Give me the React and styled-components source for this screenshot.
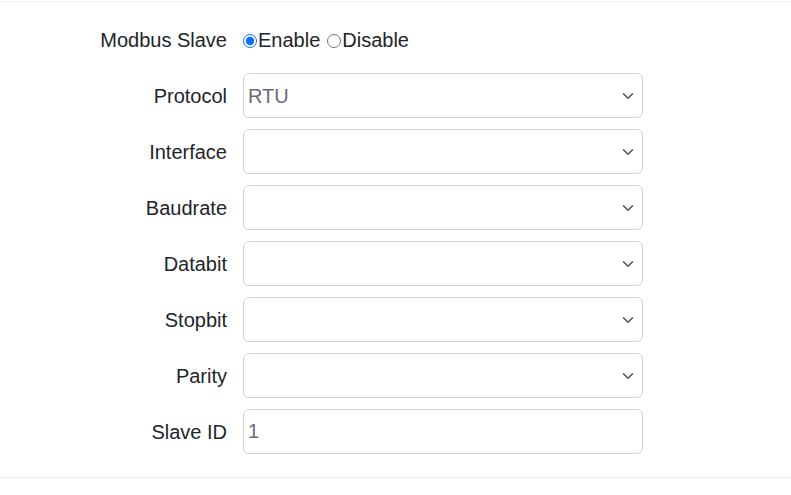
import React from 'react';
import styled, { createGlobalStyle } from 'styled-components';

const GlobalStyle = createGlobalStyle`
	body {
		margin: 0;
		background: #fff;
		font-family: Arial, 'Liberation Sans', sans-serif;
		color: #212529;
	}
`;

const Page = styled.div`
	padding-top: 1px;
`;

const Form = styled.form`
	display: flex;
	flex-direction: column;
	gap: 11px;
	padding: 15px 0 23px;
	border-top: 1px solid #eeeeee;
	border-bottom: 1px solid #eeeeee;
`;

const Row = styled.div`
	display: grid;
	grid-template-columns: 227px 400px;
	column-gap: 16px;
	align-items: center;
	min-height: 45px;
`;

const Label = styled.label`
	font-size: 20px;
	text-align: right;
	color: #212529;
	padding-top: 2px;
`;

const Radios = styled.div`
	display: flex;
	align-items: center;
	font-size: 20px;
	padding-top: 2px;
`;

const RadioItem = styled.label`
	display: flex;
	align-items: center;
	margin-right: 7px;

	input {
		margin: 0 1px 0 0;
		width: 14px;
		height: 14px;
		accent-color: #0d6efd;
	}
`;

const chevron =
	"data:image/svg+xml,%3csvg xmlns='http://www.w3.org/2000/svg' viewBox='0 0 16 16'%3e%3cpath fill='none' stroke='%23555' stroke-linecap='round' stroke-linejoin='round' stroke-width='2' d='m2 5 6 6 6-6'/%3e%3c/svg%3e";

const Select = styled.select`
	appearance: none;
	height: 45px;
	width: 400px;
	box-sizing: border-box;
	padding: 0 32px 0 4px;
	font-family: Arial, 'Liberation Sans', sans-serif;
	font-size: 20px;
	color: #6c6a75;
	background: #fff url("${chevron}") no-repeat right 8px center / 12px 12px;
	border: 1px solid #ced4da;
	border-radius: 6px;
	outline: none;
`;

const TextInput = styled.input`
	height: 45px;
	width: 400px;
	box-sizing: border-box;
	padding: 0 4px;
	font-family: Arial, 'Liberation Sans', sans-serif;
	font-size: 20px;
	color: #6c6a75;
	border: 1px solid #ced4da;
	border-radius: 6px;
	outline: none;
`;

const selects = [
	{ name: 'Protocol', value: 'RTU', options: ['RTU', 'TCP'] },
	{ name: 'Interface', value: '', options: [] },
	{ name: 'Baudrate', value: '', options: [] },
	{ name: 'Databit', value: '', options: [] },
	{ name: 'Stopbit', value: '', options: [] },
	{ name: 'Parity', value: '', options: [] },
];

const App = () => (
	<Page>
		<GlobalStyle />
		<Form>
			<Row>
				<Label>Modbus Slave</Label>
				<Radios>
					<RadioItem>
						<input type="radio" name="slave" defaultChecked />
						Enable
					</RadioItem>
					<RadioItem>
						<input type="radio" name="slave" />
						Disable
					</RadioItem>
				</Radios>
			</Row>
			{selects.map(s => (
				<Row key={s.name}>
					<Label>{s.name}</Label>
					<Select defaultValue={s.value}>
						<option value=""></option>
						{s.options.map(o => (
							<option key={o} value={o}>
								{o}
							</option>
						))}
					</Select>
				</Row>
			))}
			<Row>
				<Label>Slave ID</Label>
				<TextInput defaultValue="1" />
			</Row>
		</Form>
	</Page>
);

export default App;
